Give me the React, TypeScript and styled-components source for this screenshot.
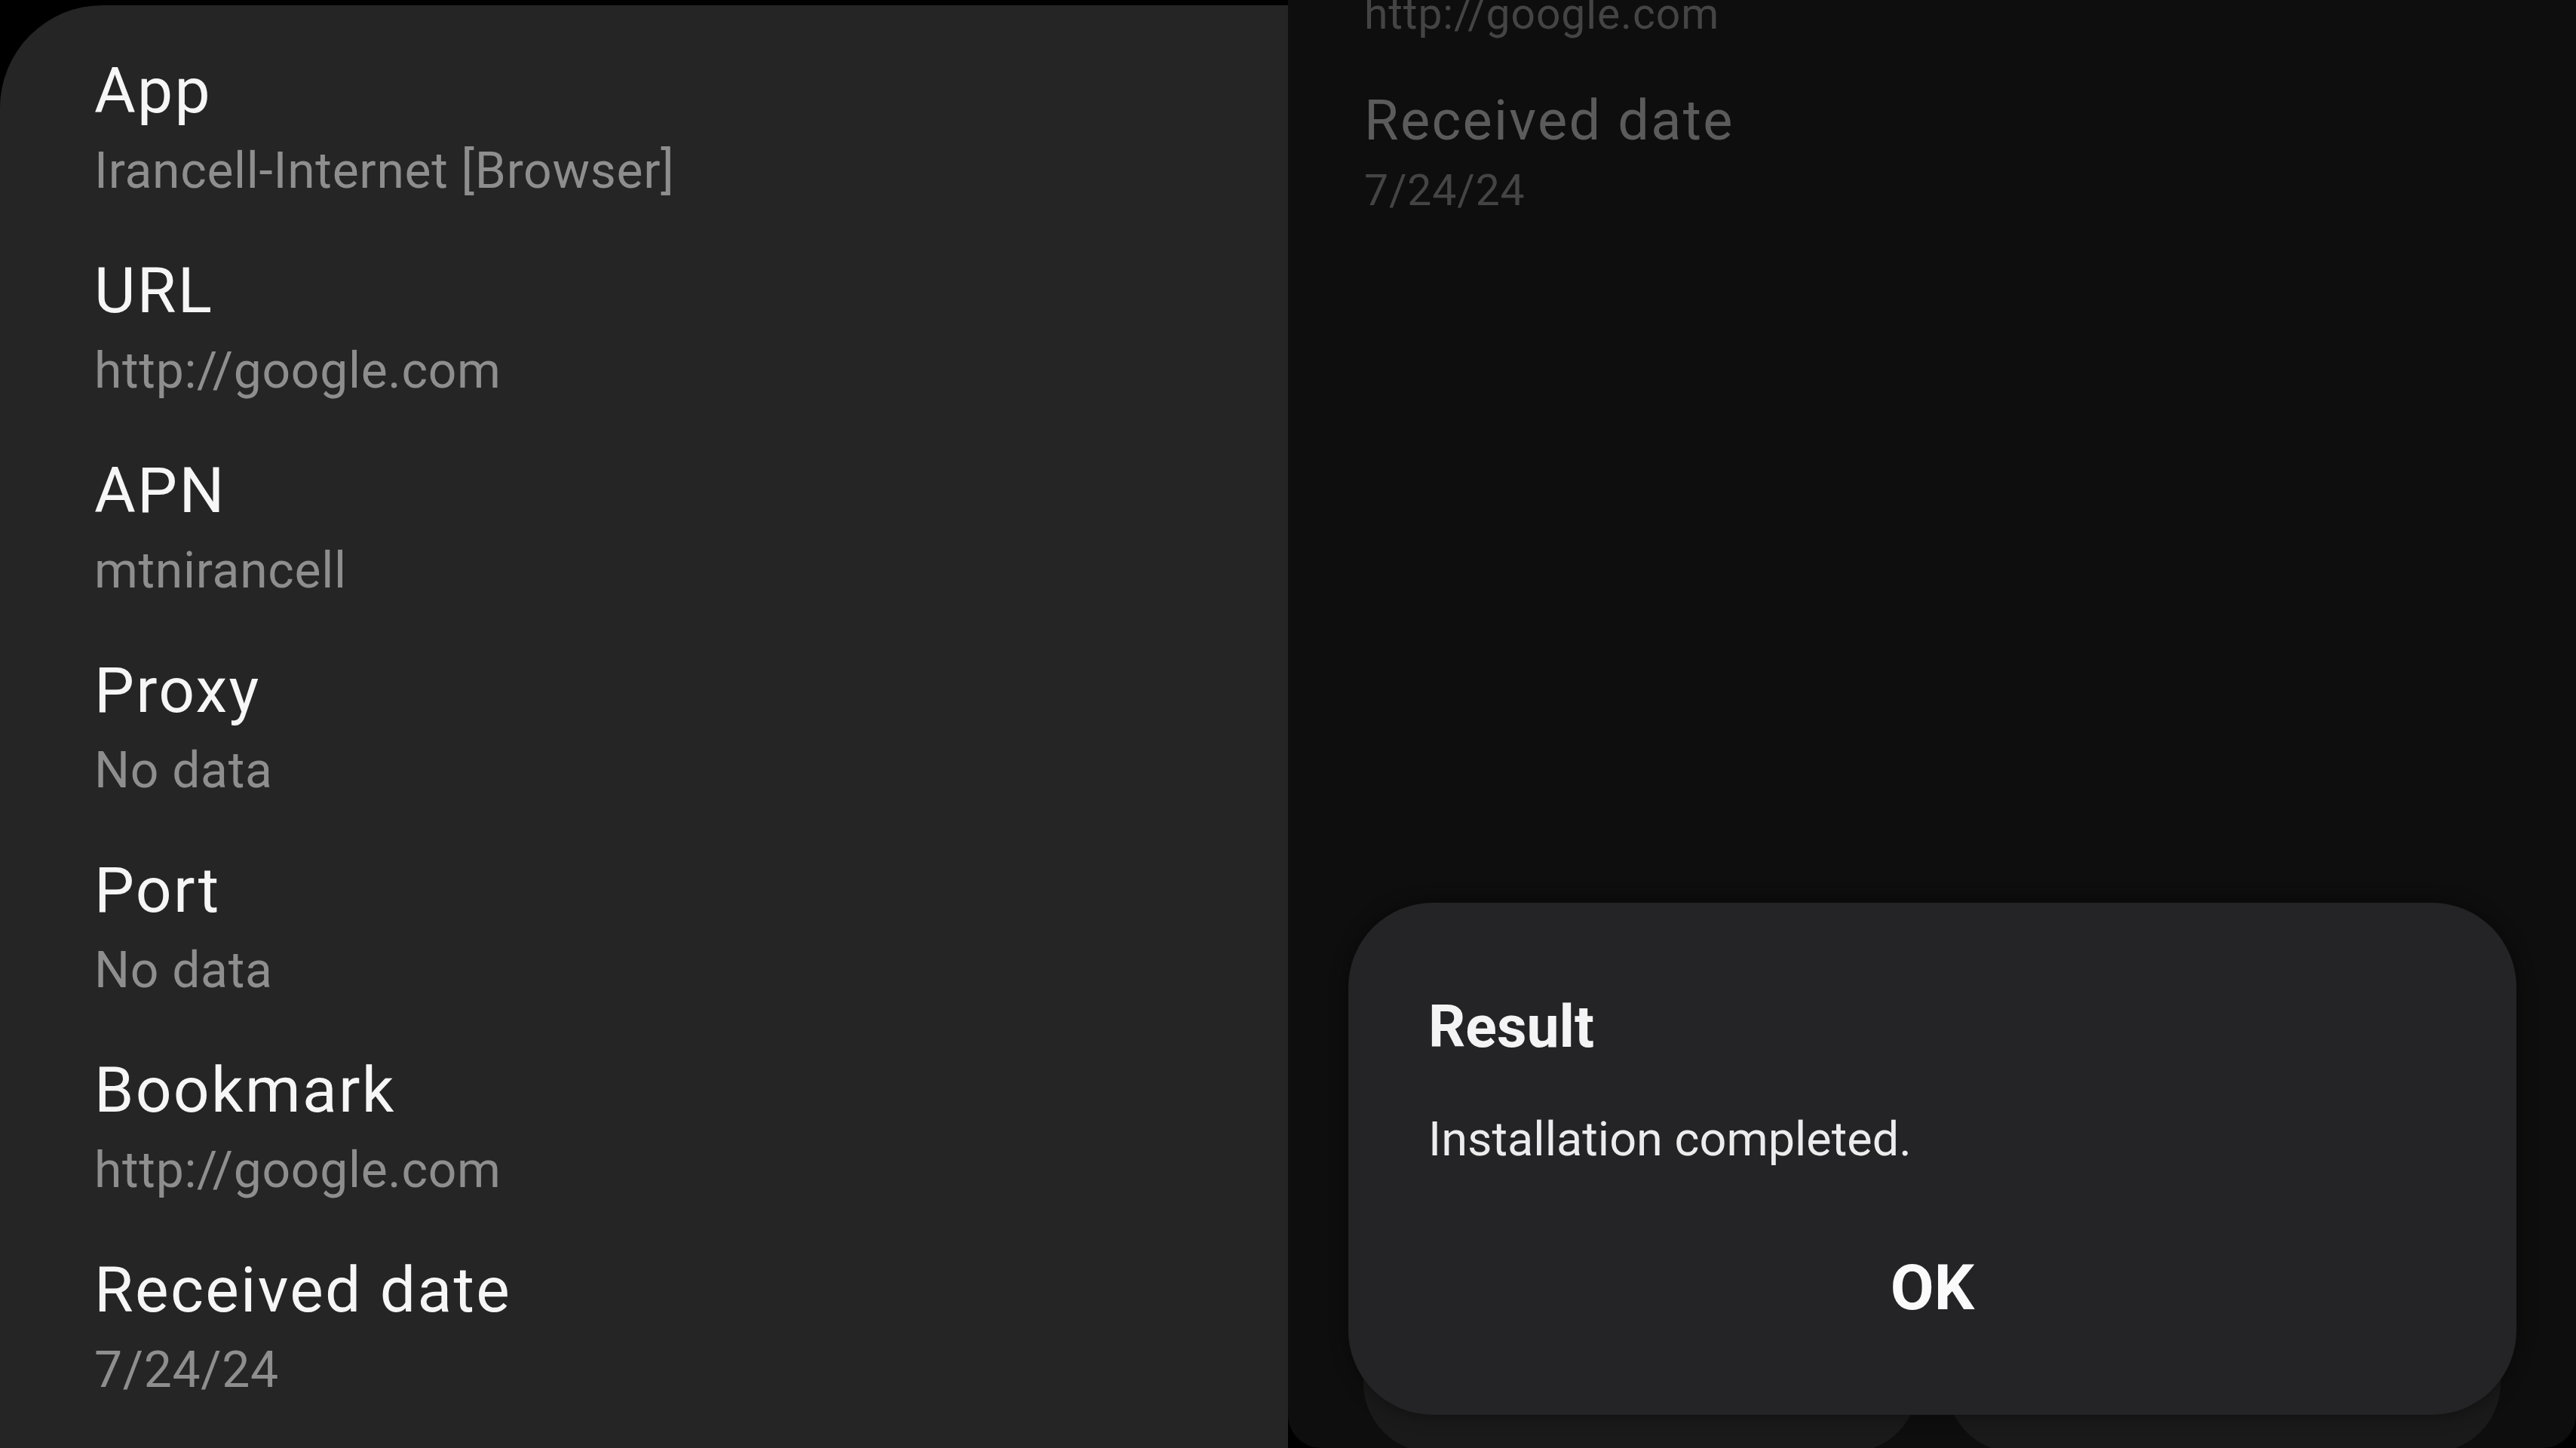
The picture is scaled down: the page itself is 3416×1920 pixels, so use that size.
import React from 'react';
import styled, { createGlobalStyle } from 'styled-components';

const GlobalStyle = createGlobalStyle`
  html, body {
    margin: 0;
    padding: 0;
    background: #000;
  }
  body {
    font-family: Roboto, "Noto Sans", "Liberation Sans", sans-serif;
    -webkit-font-smoothing: antialiased;
  }
`;

const Screen = styled.div`
  width: 3416px;
  height: 1920px;
  display: flex;
  overflow: hidden;
  background: #000;
`;

const DetailPanel = styled.section`
  width: 1708px;
  flex-shrink: 0;
  margin-top: 7px;
  background: #252525;
  border-top-left-radius: 136px;
  padding: 61px 0 0 125px;
  box-sizing: border-box;
  display: flex;
  flex-direction: column;
  gap: 53px;
`;

const Field = styled.div`
  display: flex;
  flex-direction: column;
`;

const Label = styled.div<{ $dim?: boolean }>`
  font-size: ${(p) => (p.$dim ? '74px' : '84px')};
  line-height: ${(p) => (p.$dim ? '93px' : '106px')};
  letter-spacing: 2.3px;
  color: ${(p) => (p.$dim ? '#5b5b5b' : '#f6f6f6')};
  white-space: nowrap;
`;

const Value = styled.div<{ $dim?: boolean }>`
  font-size: ${(p) => (p.$dim ? '57px' : '66px')};
  line-height: ${(p) => (p.$dim ? '93px' : '106px')};
  letter-spacing: ${(p) => (p.$dim ? '0.9px' : '0.7px')};
  color: ${(p) => (p.$dim ? '#444444' : '#8e8e8e')};
  white-space: nowrap;
`;

const BackScreen = styled.section`
  position: relative;
  flex: 1;
  height: 1920px;
  background: #0e0e0e;
  border-bottom-left-radius: 44px;
  border-bottom-right-radius: 44px;
  overflow: hidden;
  display: flex;
  flex-direction: column;
`;

const BackList = styled.div`
  padding-left: 101px;
  margin-top: -28px;
  display: flex;
  flex-direction: column;
  gap: 48px;
`;

const ButtonBar = styled.div`
  margin-top: auto;
  margin-bottom: -6px;
  padding: 0 100px;
  display: flex;
  gap: 37px;
`;

const GhostButton = styled.div`
  flex: 1;
  height: 220px;
  background: #1a1a1a;
  border-radius: 92px;
`;

const Dialog = styled.div`
  position: absolute;
  left: 80px;
  top: 1197px;
  width: 1549px;
  height: 679px;
  box-sizing: border-box;
  background: #242426;
  border-radius: 112px;
  box-shadow: 0 0 24px rgba(0, 0, 0, 0.45);
  padding: 120px 106px 0 106px;
  display: flex;
  flex-direction: column;
`;

const DialogTitle = styled.div`
  font-size: 77px;
  line-height: 90px;
  font-weight: 700;
  color: #f4f4f4;
`;

const DialogText = styled.div`
  margin-top: 59px;
  font-size: 63px;
  line-height: 90px;
  color: #ececec;
`;

const DialogAction = styled.div`
  margin-top: 102px;
  font-size: 84px;
  line-height: 100px;
  font-weight: 700;
  color: #fafafa;
  text-align: center;
  margin-left: -106px;
  margin-right: -106px;
`;

const fields = [
  { label: 'App', value: 'Irancell-Internet [Browser]' },
  { label: 'URL', value: 'http://google.com' },
  { label: 'APN', value: 'mtnirancell' },
  { label: 'Proxy', value: 'No data' },
  { label: 'Port', value: 'No data' },
  { label: 'Bookmark', value: 'http://google.com' },
  { label: 'Received date', value: '7/24/24' },
];

export default function App() {
  return (
    <>
      <GlobalStyle />
      <Screen>
        <DetailPanel>
          {fields.map((f) => (
            <Field key={f.label}>
              <Label>{f.label}</Label>
              <Value>{f.value}</Value>
            </Field>
          ))}
        </DetailPanel>
        <BackScreen>
          <BackList>
            <Value $dim>http://google.com</Value>
            <Field>
              <Label $dim>Received date</Label>
              <Value $dim>7/24/24</Value>
            </Field>
          </BackList>
          <ButtonBar>
            <GhostButton />
            <GhostButton />
          </ButtonBar>
          <Dialog>
            <DialogTitle>Result</DialogTitle>
            <DialogText>Installation completed.</DialogText>
            <DialogAction>OK</DialogAction>
          </Dialog>
        </BackScreen>
      </Screen>
    </>
  );
}
